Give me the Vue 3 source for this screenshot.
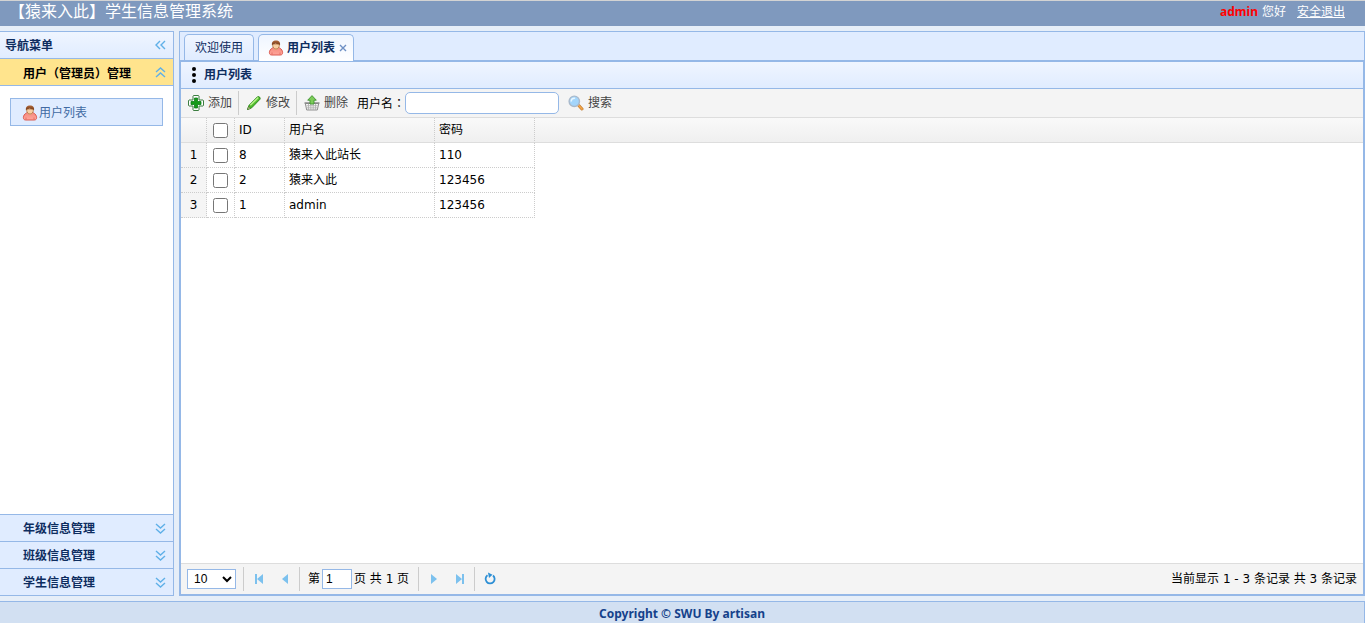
<script setup>
import { ref } from 'vue'

const groups = ['年级信息管理', '班级信息管理', '学生信息管理']
const rows = [
  { id: 8, name: '猿来入此站长', password: '110' },
  { id: 2, name: '猿来入此', password: '123456' },
  { id: 1, name: 'admin', password: '123456' },
]
const selected = ref([])
const keyword = ref('')
const page = ref('1')
const pageSize = ref('10')

function toggleAll(event) {
  selected.value = event.target.checked ? rows.map((r) => r.id) : []
}
</script>

<template>
  <div class="page">
    <svg class="defs" aria-hidden="true">
      <defs>
        <linearGradient id="skin" x1="0" y1="0" x2="0" y2="1">
          <stop offset="0" stop-color="#f58a7c" />
          <stop offset="1" stop-color="#ffa69b" />
        </linearGradient>
        <linearGradient id="hair" x1="0" y1="0" x2="0" y2="1">
          <stop offset="0" stop-color="#b0683a" />
          <stop offset="1" stop-color="#6f3514" />
        </linearGradient>
        <symbol id="user" viewBox="0 0 16 16">
          <path d="M1.500 13.500c-.4-1.500.2-3.200 1.500-4.500C4 8 5 7.500 6 7.500h4c1 0 2 .5 3 1.500 1.300 1.300 1.900 3 1.500 4.500-.3 1.200-1.300 1.500-2.500 1.500H4c-1.200 0-2.200-.3-2.500-1.500z" fill="url(#skin)" stroke="#dc5a50" />
          <path d="M4 12.500v2M12 12.500v2" stroke="#e0655b" stroke-width=".8" />
          <path d="M5.800 7.200h4.400v1.300L8 10 5.800 8.500z" fill="#f0bd8b" />
          <path d="M4.700 4h6.600v1.500C11.300 7.500 9.800 9 8 9S4.700 7.500 4.700 5.500z" fill="#f8cfa4" stroke="#a5662f" stroke-width=".7" />
          <path d="M4 5.500C3.400 2.300 5 .5 8 .5s4.600 1.800 4 5l-.9-1.300c-1.500.2-2.500-.2-3.500-.7-.8.6-1.700.8-2.700.8z" fill="url(#hair)" />
        </symbol>
      </defs>
    </svg>

    <header class="top">
      <h1>【猿来入此】学生信息管理系统</h1>
      <div class="account">
        <strong>admin</strong>
        <span>您好</span>
        <a href="#">安全退出</a>
      </div>
    </header>

    <div class="middle">
      <nav class="west" aria-label="导航菜单">
        <div class="west-title">
          <span>导航菜单</span>
          <button type="button" aria-label="收起导航">
            <svg width="16" height="16" viewBox="0 0 16 16"><path d="M8 3 4 7l4 4M13 3 9 7l4 4" /></svg>
          </button>
        </div>
        <button type="button" class="group open">
          <span>用户<span class="mid">（</span>管理员<span class="mid">）</span>管理</span>
          <svg width="16" height="16" viewBox="0 0 16 16"><path d="M4 7l4.500-4L13 7M4 12l4.500-4 4.500 4" /></svg>
        </button>
        <div class="group-body">
          <a href="#" class="nav-link"><svg width="16" height="16"><use href="#user" /></svg>用户列表</a>
        </div>
        <button v-for="g in groups" :key="g" type="button" class="group">
          <span>{{ g }}</span>
          <svg width="16" height="16" viewBox="0 0 16 16"><path d="M4 3l4.500 4L13 3M4 8l4.500 4L13 8" /></svg>
        </button>
      </nav>

      <main class="center">
        <div class="tabs">
          <button type="button" class="tab">欢迎使用</button>
          <div class="tab active">
            <svg width="16" height="16"><use href="#user" /></svg>
            <span>用户列表</span>
            <button type="button" class="close" aria-label="关闭">
              <svg width="8" height="8" viewBox="0 0 8 8"><path d="M1 1l6 6M7 1 1 7" /></svg>
            </button>
          </div>
        </div>

        <section class="panel">
          <h2 class="panel-title">
            <svg width="6" height="16" viewBox="0 0 6 16"><circle cx="3" cy="2" r="2" /><circle cx="3" cy="8" r="2" /><circle cx="3" cy="14" r="2" /></svg>
            用户列表
          </h2>

          <div class="toolbar">
            <button type="button" class="tool">
              <svg width="16" height="16" viewBox="0 0 16 16">
                <path d="M5.500.5h5l.5.500V5h4l.500.500v5l-.5.500H11v4l-.5.500h-5L5 15v-4H1l-.5-.5v-5L1 5h4V1z" fill="#fff" stroke="#3c7d40" stroke-linejoin="round" />
                <path d="M6.500 3h3v3.500H13v3H9.500V13h-3V9.500H3v-3h3.500z" fill="#159a19" stroke="#0d7d17" stroke-width=".8" />
              </svg>添加
            </button>
            <i class="sep"></i>
            <button type="button" class="tool">
              <svg width="16" height="16" viewBox="0 0 16 16">
                <path d="M1.500 14.500l1.600-4.300 8.300-8.300c1.400-1.100 3.500.8 2.500 2.400l-8.200 8.500z" fill="#4fbd2c" stroke="#2c861d" stroke-linejoin="round" />
                <path d="M4.300 10.300l7.900-7.800" stroke="#b6f088" stroke-width="1.500" />
                <path d="M1.500 14.500l1.100-3 2 2z" fill="#d9cfa4" stroke="#3f6b24" stroke-width=".6" />
              </svg>修改
            </button>
            <i class="sep"></i>
            <button type="button" class="tool">
              <svg width="16" height="16" viewBox="0 0 16 16">
                <path d="M1.300 8.500h13.400L13.300 15H2.700z" fill="#f4f4f4" stroke="#8f8f8f" />
                <path d="M2.500 10.700h11M3 12.800h10M4.500 9v6M6.800 9v6M9.200 9v6M11.500 9v6" stroke="#adadad" stroke-width=".8" />
                <path d="M.5 8h15" stroke="#858585" stroke-width="1.400" />
                <path d="M8 .6l4.300 4.600H10V9H6V5.200H3.700z" fill="#7ccc58" stroke="#3f9331" stroke-width=".9" stroke-linejoin="round" />
              </svg>删除
            </button>
            <label for="keyword">用户名<span class="mid">：</span></label>
            <input id="keyword" v-model="keyword" type="text" class="keyword" />
            <button type="button" class="tool">
              <svg width="16" height="16" viewBox="0 0 16 16">
                <path d="M10.800 10.500l3.200 3.500" stroke="#c07a30" stroke-width="3" stroke-linecap="round" />
                <path d="M10.800 10.500l3.200 3.500" stroke="#f6a747" stroke-width="1.700" stroke-linecap="round" />
                <circle cx="6.300" cy="6.300" r="5.200" fill="#a3d5fb" stroke="#a9b9cb" stroke-width="1.400" />
                <path d="M3.200 6c.2-1.800 1.400-2.800 3.300-2.800" stroke="#e8f6ff" stroke-width="1.500" fill="none" stroke-linecap="round" />
              </svg>搜索
            </button>
          </div>

          <div class="grid">
            <table>
              <colgroup>
                <col class="c-num" /><col class="c-check" /><col class="c-id" /><col class="c-name" /><col class="c-pass" /><col />
              </colgroup>
              <thead>
                <tr>
                  <th></th>
                  <th class="check"><input type="checkbox" aria-label="全选" :checked="selected.length === rows.length" @change="toggleAll" /></th>
                  <th>ID</th>
                  <th>用户名</th>
                  <th>密码</th>
                  <th class="rest"></th>
                </tr>
              </thead>
              <tbody>
                <tr v-for="(r, i) in rows" :key="r.id">
                  <td class="num">{{ i + 1 }}</td>
                  <td class="check"><input v-model="selected" type="checkbox" :value="r.id" :aria-label="r.name" /></td>
                  <td>{{ r.id }}</td>
                  <td>{{ r.name }}</td>
                  <td>{{ r.password }}</td>
                  <td class="rest"></td>
                </tr>
              </tbody>
            </table>
          </div>

          <div class="pager">
            <select v-model="pageSize" aria-label="每页条数">
              <option>10</option>
              <option>20</option>
              <option>50</option>
            </select>
            <i class="sep"></i>
            <button type="button" aria-label="首页"><svg width="16" height="16" viewBox="0 0 16 16"><path d="M4 3h2v10H4zM12 3v10L6 8z" /></svg></button>
            <button type="button" aria-label="上一页"><svg width="16" height="16" viewBox="0 0 16 16"><path d="M11 3v10L5 8z" /></svg></button>
            <i class="sep"></i>
            <label for="page">第</label>
            <input id="page" v-model="page" type="text" />
            <span>页 共 1 页</span>
            <i class="sep"></i>
            <button type="button" aria-label="下一页"><svg width="16" height="16" viewBox="0 0 16 16"><path d="M5 3v10l6-5z" /></svg></button>
            <button type="button" aria-label="末页"><svg width="16" height="16" viewBox="0 0 16 16"><path d="M4 3v10l6-5zM10 3h2v10h-2z" /></svg></button>
            <i class="sep"></i>
            <button type="button" aria-label="刷新">
              <svg width="16" height="16" viewBox="0 0 16 16"><path class="ring" d="M11 4.500A4.500 4.500 0 1 1 5.500 4.300" /><path class="tip" d="M6 1.500l4.500 2.300L7 7z" /></svg>
            </button>
            <span class="info">当前显示 1 - 3 条记录 共 3 条记录</span>
          </div>
        </section>
      </main>
    </div>

    <footer class="bottom">Copyright © SWU By artisan</footer>
  </div>
</template>

<style>
body {
  margin: 0;
}
</style>

<style scoped>
.page {
  display: flex;
  flex-direction: column;
  height: 100vh;
  box-sizing: border-box;
  overflow: hidden;
  background: #e6eef8;
  color: #000;
  font: 12px/18px "DejaVu Sans", "Noto Sans CJK SC", sans-serif;
}
.page * {
  box-sizing: border-box;
}
.defs {
  position: absolute;
  width: 0;
  height: 0;
}
.mid {
  font-family: "Noto Sans CJK TC", sans-serif;
}
button {
  margin: 0;
  padding: 0;
  border: 0;
  background: none;
  font: inherit;
  color: inherit;
  cursor: pointer;
}
svg {
  display: block;
  flex: none;
  fill: none;
}
.top {
  display: flex;
  justify-content: space-between;
  flex: none;
  height: 26px;
  padding: 0 20px 0 9px;
  border-top: 1px solid #d3d3d3;
  background: #7f99be;
  color: #fff;
}
.top h1 {
  margin: 0;
  font-size: 16px;
  line-height: 22px;
  font-weight: 400;
}
.account {
  display: flex;
  gap: 4px;
  line-height: 22px;
}
.account strong {
  color: #f00;
  font-family: "Noto Sans", sans-serif;
}
.account a {
  margin-left: 7px;
  color: #fff;
}
.middle {
  display: flex;
  flex: 1;
  gap: 5px;
  min-height: 0;
  padding: 5px 0;
}
.west {
  display: flex;
  flex-direction: column;
  flex: none;
  width: 174px;
  border: 1px solid #95b8e7;
  border-width: 1px 1px 0 0;
  background: #fff;
  color: #0e2d5f;
  font-weight: 700;
}
.west path {
  stroke: #5fb0e8;
  stroke-width: 1.4;
}
.west-title,
.group {
  display: flex;
  align-items: center;
  justify-content: space-between;
  flex: none;
  height: 27px;
  border-bottom: 1px solid #95b8e7;
}
.west-title {
  padding: 2px 5px 0;
  background: linear-gradient(#eff5ff, #e0ecff);
}
.group {
  padding: 2px 5px 0 23px;
  background: #e0ecff;
}
.group.open {
  background: #ffe48d;
  color: #000;
}
.group-body {
  flex: 1;
  padding: 12px 10px;
  border-bottom: 1px solid #95b8e7;
}
.nav-link {
  display: flex;
  align-items: center;
  gap: 1px;
  height: 28px;
  padding: 2px 11px 0;
  border: 1px solid #95b8e7;
  background: #e0ecff;
  color: #416aa3;
  font-weight: 400;
  text-decoration: none;
}
.center {
  display: flex;
  flex-direction: column;
  flex: 1;
  min-width: 0;
}
.tabs {
  display: flex;
  align-items: flex-end;
  flex: none;
  gap: 4px;
  height: 30px;
  padding: 0 4px;
  border: 1px solid #95b8e7;
  background: #e0ecff;
}
.tab {
  display: flex;
  align-items: center;
  height: 26px;
  padding: 0 10px;
  border: 1px solid #95b8e7;
  border-bottom: 0;
  border-radius: 5px 5px 0 0;
  background: linear-gradient(#eff5ff, #e0ecff);
  color: #0e2d5f;
}
.tab.active {
  z-index: 1;
  height: 27px;
  margin-bottom: -1px;
  padding: 0 6px 0 9px;
  background: linear-gradient(#eff5ff, #fff);
  font-weight: 700;
}
.tab.active > span {
  margin: 0 4px 0 3px;
}
.close path {
  stroke: #6d8fc4;
  stroke-width: 1.4;
}
.panel {
  display: flex;
  flex-direction: column;
  flex: 1;
  min-height: 0;
  border: 2px solid #95b8e7;
  border-top-width: 1px;
  background: #fff;
}
.panel-title {
  display: flex;
  align-items: center;
  flex: none;
  gap: 7px;
  height: 27px;
  margin: 0;
  padding: 0 10px;
  border-bottom: 1px solid #95b8e7;
  background: linear-gradient(#eff5ff, #e0ecff);
  color: #0e2d5f;
  font-size: 12px;
}
.panel-title circle {
  fill: #000;
}
.toolbar {
  display: flex;
  align-items: center;
  flex: none;
  height: 29px;
  padding: 0 7px;
  border-bottom: 1px solid #ddd;
  background: #f4f4f4;
}
.tool {
  display: flex;
  align-items: center;
  gap: 4px;
  color: #444;
}
.sep {
  width: 1px;
  height: 24px;
  margin: 0 7px 0 6px;
  background: #ccc;
}
.toolbar label {
  width: 48px;
  margin-left: 9px;
  white-space: nowrap;
}
.keyword {
  width: 154px;
  height: 22px;
  margin-right: 9px;
  border: 1px solid #95b8e7;
  border-radius: 5px;
  font: inherit;
}
.grid {
  flex: 1;
  min-height: 0;
  overflow: hidden;
}
table {
  width: 100%;
  table-layout: fixed;
  border-collapse: separate;
  border-spacing: 0;
}
.c-num {
  width: 26px;
}
.c-check {
  width: 28px;
}
.c-id {
  width: 50px;
}
.c-name {
  width: 150px;
}
.c-pass {
  width: 100px;
}
thead tr {
  background: linear-gradient(#f9f9f9, #efefef);
}
th,
td {
  height: 25px;
  padding: 0 4px;
  border: 0 dotted #ccc;
  border-width: 0 1px 1px 0;
  text-align: left;
  font-weight: 400;
}
th {
  border-bottom: 1px solid #ddd;
}
.num {
  padding: 0;
  background: #f5f5f5;
  text-align: center;
}
.check {
  padding: 0;
}
.check input {
  display: block;
  width: 15px;
  height: 15px;
  margin: 0 auto;
}
th.rest {
  border-right: 0;
}
td.rest {
  border: 0;
}
.pager {
  display: flex;
  align-items: center;
  flex: none;
  height: 31px;
  padding: 0 6px;
  border-top: 1px solid #ddd;
  background: #f4f4f4;
  white-space: nowrap;
}
.pager select {
  width: 49px;
  height: 20px;
  padding-left: 2px;
  border: 1px solid #95b8e7;
  background: #fff;
  font: 12px "Liberation Sans", sans-serif;
}
.pager .sep {
  margin: 0 7px;
}
.pager button + button {
  margin-left: 10px;
}
.pager button + .sep {
  margin-left: 6px;
}
.pager path {
  fill: #7cc1ee;
}
.pager .ring {
  fill: none;
  stroke: #2d8fd5;
  stroke-width: 1.8;
}
.pager .tip {
  fill: #2d8fd5;
}
.pager label {
  margin: 0 2px 0 1px;
}
.pager input {
  width: 30px;
  height: 20px;
  margin-right: 2px;
  padding: 0 3px;
  border: 1px solid #95b8e7;
  font: 12px "Liberation Sans", sans-serif;
}
.pager input + span {
  margin-right: 2px;
}
.info {
  margin-left: auto;
}
.bottom {
  flex: none;
  height: 22px;
  border: 1px solid #95b8e7;
  border-width: 1px 1px 0 0;
  background: #d2e0f2;
  color: #15428b;
  font-family: "Noto Sans", sans-serif;
  font-weight: 700;
  line-height: 24px;
  text-align: center;
}
</style>
